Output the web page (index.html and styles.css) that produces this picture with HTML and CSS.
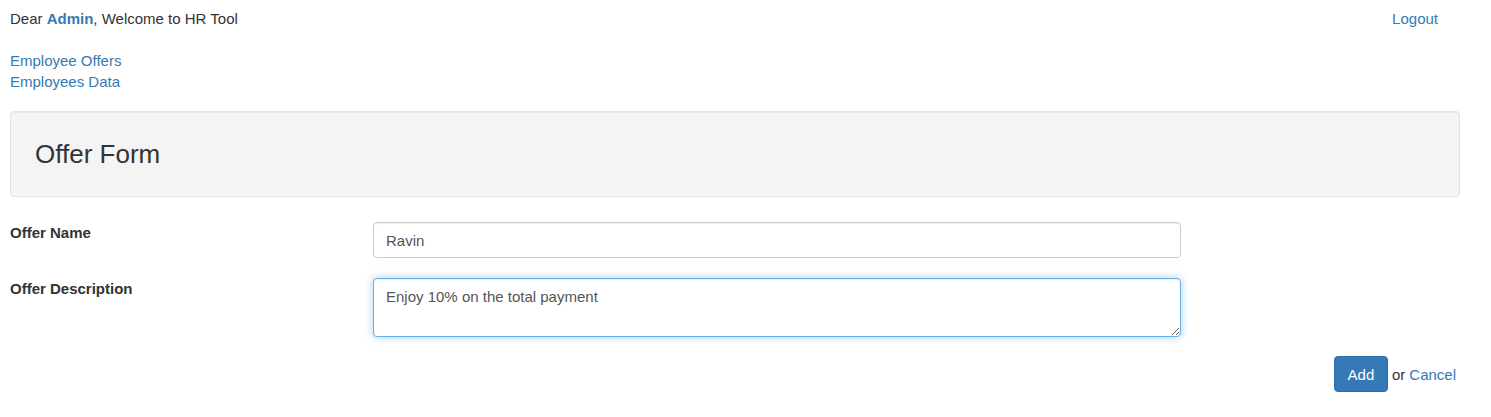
FILE: index.html
```html
<!DOCTYPE html>
<html>
<head>
<meta charset="utf-8">
<link rel="stylesheet" href="styles.css">
</head>
<body>
<div class="page">
  <div class="topbar">
    <div class="greeting">Dear <a class="strong-link" href="#">Admin</a>, Welcome to HR Tool</div>
    <a class="logout" href="#">Logout</a>
  </div>
  <nav class="nav-links">
    <a href="#">Employee Offers</a>
    <a href="#">Employees Data</a>
  </nav>
  <div class="well">
    <h3 class="well-title">Offer Form</h3>
  </div>
  <form class="offer-form">
    <label class="form-label" for="offerName">Offer Name</label>
    <input class="form-control" id="offerName" type="text" value="Ravin">
    <label class="form-label" for="offerDesc">Offer Description</label>
    <textarea class="form-control textarea focused" id="offerDesc">Enjoy 10% on the total payment</textarea>
  </form>
  <div class="actions">
    <button class="btn-primary" type="button">Add</button>
    <span class="or">or</span>
    <a href="#">Cancel</a>
  </div>
</div>
</body>
</html>
```
FILE: styles.css
```css
* { box-sizing: border-box; }
html, body { margin: 0; padding: 0; background: #fff; }
body {
  font-family: "Liberation Sans", Arial, Helvetica, sans-serif;
  font-size: 15px;
  line-height: 21px;
  color: #333;
}
a { color: #337ab7; text-decoration: none; }
.page { padding: 8px 10px 0 10px; width: 1470px; }
.topbar {
  display: flex;
  justify-content: space-between;
  align-items: center;
  height: 21px;
}
.strong-link { font-weight: bold; }
.logout { margin-right: 22px; }
.nav-links {
  display: flex;
  flex-direction: column;
  align-items: flex-start;
  margin-top: 21px;
}
.well {
  margin-top: 19px;
  height: 86px;
  background: #f4f4f4;
  border: 1px solid #e3e3e3;
  border-radius: 4px;
  box-shadow: inset 0 1px 1px rgba(0,0,0,0.05);
  display: flex;
  align-items: center;
  padding-left: 24px;
}
.well-title {
  margin: 0;
  font-size: 26px;
  font-weight: normal;
  line-height: 30px;
  color: #333;
}
.offer-form {
  display: grid;
  grid-template-columns: 363px 808px;
  row-gap: 20px;
  margin-top: 25px;
}
.form-label {
  font-weight: bold;
  line-height: 21px;
}
.form-control {
  font-family: inherit;
  font-size: 15px;
  color: #555;
  height: 36px;
  padding: 6px 12px;
  border: 1px solid #ccc;
  border-radius: 4px;
  box-shadow: inset 0 1px 1px rgba(0,0,0,0.075);
  background: #fff;
  width: 100%;
  outline: none;
}
.textarea {
  height: 59px;
  line-height: 21px;
  padding: 7px 12px;
  resize: vertical;
}
.focused {
  border-color: #66afe9;
  box-shadow: inset 0 1px 1px rgba(0,0,0,0.075), 0 0 8px rgba(102,175,233,0.6);
}
.actions {
  display: flex;
  justify-content: flex-end;
  align-items: center;
  margin-top: 19px;
  padding-right: 4px;
}
.btn-primary {
  font-family: inherit;
  font-size: 15px;
  color: #fff;
  background: #337ab7;
  border: 1px solid #2e6da4;
  border-radius: 4px;
  height: 36px;
  width: 54px;
  padding: 0;
  margin-right: 4px;
}
.or { margin-right: 4px; }
```
